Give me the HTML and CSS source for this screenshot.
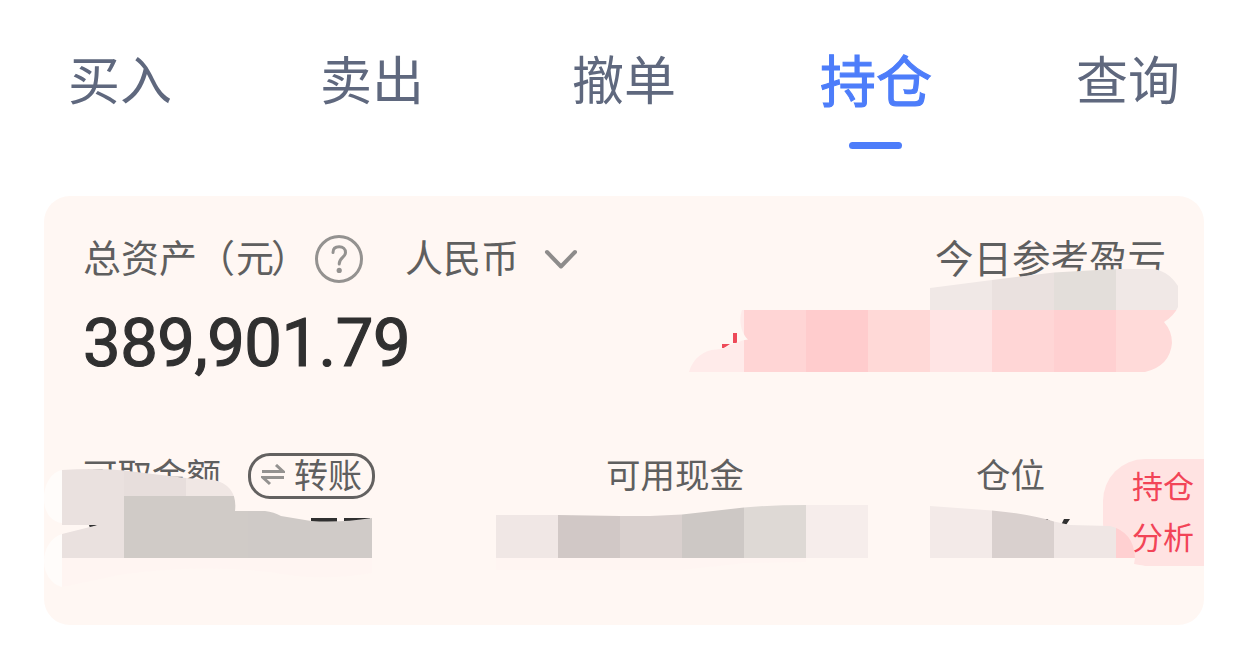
FILE: index.html
```html
<!DOCTYPE html>
<html lang="zh-CN">
<head>
    <meta charset="UTF-8">
    <meta name="viewport" content="width=device-width, initial-scale=1.0">
    <title>持仓</title>
    <link rel="stylesheet" href="styles.css">
</head>
<body>

    <nav class="tabs">
        <a class="tab">买入</a>
        <a class="tab">卖出</a>
        <a class="tab">撤单</a>
        <a class="tab active">持仓</a>
        <a class="tab">查询</a>
    </nav>

    <main class="card">
        <div class="summary">
            <div class="label">总资产（<span class="unit">元</span>）</div>
            <svg class="help" viewBox="0 0 48 48">
                <circle cx="24" cy="24" r="22.5"/>
                <path d="M18 17.5C18 13.5 20.5 11.8 24.2 11.8C28 11.8 30.5 14.2 30.5 17.5C30.5 22.5 24.2 22.5 24.2 29"/>
                <circle class="dot" cx="24.2" cy="35.4" r="2.6"/>
            </svg>
            <div class="label currency">人民币</div>
            <svg class="arrow" viewBox="0 0 34 22">
                <path d="M3 3L17 17.5L31 3"/>
            </svg>
            <div class="label today">今日参考盈亏</div>
        </div>
        <div class="total">389,901.79</div>

        <div class="details">
            <div class="detail">
                <span>可取金额</span>
                <button class="transfer">
                    <svg viewBox="0 0 24 22">
                        <path d="M1 7.5H22L15 1M23 13.5H2L9 20"/>
                    </svg>
                    <span>转账</span>
                </button>
            </div>
            <div class="detail"><span>可用现金</span></div>
            <div class="detail"><span>仓位</span></div>
        </div>

        <div class="analysis">持仓<br>分析</div>

        <!-- mosaic over the private amounts -->
        <svg class="mosaic" viewBox="44 196 1160 429">
            <defs>
                <clipPath id="profit">
                    <path d="M689 372C693 358 704 350 716 349.5C727 349 735 341 748 339.5C742 334 738 322 742 310H930V288L992 280L1054 272.5L1098 270L1120 269H1150Q1167 269 1178 286V307Q1174 316 1164 322Q1172 331 1172 343Q1170 366 1145 372Z"/>
                </clipPath>
                <clipPath id="withdraw">
                    <path d="M62 470Q95 468 124 470.5L186 478L214 480C230 484 237 494 235 511L265 511Q274 512 281 516L311 521Q340 523 372 518V558H62V534L98 525H62Z"/>
                </clipPath>
                <clipPath id="cash">
                    <path d="M496 515H558L620 516H650L682 514.5L744 507.5Q770 505 806 505H868V558H496Z"/>
                </clipPath>
                <clipPath id="position">
                    <path d="M930 506L992 510.5Q1030 514 1054 521.5L1070 525L1110 526Q1134 532 1135 558H930Z"/>
                </clipPath>
            </defs>

            <g class="red">
                <rect x="733" y="333" width="4" height="10"/>
                <path d="M722 344H730L724 348H722Z"/>
            </g>
            <g class="dark">
                <path d="M89 525H98L90 528Z"/>
                <path d="M311 518H337V522H311ZM344 518H370V522H344Z"/>
                <path d="M1044 520L1047 519L1050 521ZM1064 519H1070L1066 525H1061Z"/>
            </g>

            <g clip-path="url(#profit)">
                <rect x="930" y="268" width="62" height="42" fill="#f0e8e6"/>
                <rect x="992" y="268" width="62" height="42" fill="#eae1df"/>
                <rect x="1054" y="268" width="62" height="42" fill="#e3deda"/>
                <rect x="1116" y="268" width="62" height="42" fill="#f0e8e6"/>
                <rect x="688" y="310" width="56" height="62" fill="#ffebea"/>
                <rect x="744" y="310" width="62" height="62" fill="#ffd5d5"/>
                <rect x="806" y="310" width="62" height="62" fill="#ffcccd"/>
                <rect x="868" y="310" width="62" height="62" fill="#ffd9d7"/>
                <rect x="930" y="310" width="62" height="62" fill="#ffe4e4"/>
                <rect x="992" y="310" width="62" height="62" fill="#ffd6d6"/>
                <rect x="1054" y="310" width="62" height="62" fill="#ffd0d1"/>
                <rect x="1116" y="310" width="62" height="62" fill="#ffdad9"/>
            </g>

            <path d="M62 470C40 474 36 520 62 523ZM62 534C38 542 38 580 62 587Z" fill="#fffcfa"/>
            <path d="M62 558H372V573Q320 582 270 572Q200 564 124 574L62 587Z" fill="#fff5f2"/>
            <g clip-path="url(#withdraw)">
                <rect x="62" y="466" width="62" height="92" fill="#eae1df"/>
                <rect x="124" y="466" width="62" height="30" fill="#e7dedc"/>
                <rect x="186" y="466" width="62" height="30" fill="#f0e7e4"/>
                <rect x="124" y="496" width="124" height="62" fill="#d0cbc7"/>
                <rect x="248" y="496" width="62" height="62" fill="#cfcac7"/>
                <rect x="310" y="496" width="62" height="62" fill="#d0cbc8"/>
            </g>

            <path d="M496 558H806V562L744 563L682 570H496Z" fill="#fff5f2"/>
            <g clip-path="url(#cash)">
                <rect x="496" y="500" width="62" height="58" fill="#f0e7e5"/>
                <rect x="558" y="500" width="62" height="58" fill="#d1c8c6"/>
                <rect x="620" y="500" width="62" height="58" fill="#d9d0ce"/>
                <rect x="682" y="500" width="62" height="58" fill="#cdc8c5"/>
                <rect x="744" y="500" width="62" height="58" fill="#ded9d5"/>
                <rect x="806" y="500" width="62" height="58" fill="#f6edeb"/>
            </g>

            <path d="M1100 558H1135L1134 564L1145 566V568H1100Z" fill="#fff7f3"/>
            <g clip-path="url(#position)">
                <rect x="930" y="500" width="62" height="58" fill="#f3eae8"/>
                <rect x="992" y="500" width="62" height="58" fill="#d9d0ce"/>
                <rect x="1054" y="500" width="62" height="58" fill="#efe6e4"/>
                <rect x="1116" y="500" width="20" height="58" fill="#ffd0d1"/>
            </g>
        </svg>
    </main>

</body>
</html>
```
FILE: styles.css
```css
body {
    font-family: "Noto Sans CJK SC", sans-serif;
    margin: 0;
    background-color: #fff;
    color: #5f5f5f;
    height: 647px;
    overflow: hidden;
}
.tabs {
    display: grid;
    grid-template-columns: repeat(5, 252px);
    justify-content: center;
    width: 1248px;
    height: 149px;
}
.tab {
    display: flex;
    flex-direction: column;
    align-items: center;
    font-size: 52px;
    line-height: 76px;
    padding-top: 40px;
    color: #5f687e;
}
.tab.active {
    font-size: 56px;
    color: #4d7dfa;
    -webkit-text-stroke: 1.1px #4d7dfa;
}
.tab.active::after {
    content: "";
    width: 53px;
    height: 7px;
    margin: 26px 2px 0 0;
    border-radius: 4px;
    background-color: #4d7dfa;
}
.card {
    position: relative;
    box-sizing: border-box;
    width: 1160px;
    height: 429px;
    margin: 47px 0 0 44px;
    padding: 36px 38px 0 39px;
    border-radius: 26px;
    background-color: #fff7f3;
    overflow: hidden;
}
.summary {
    display: flex;
    align-items: center;
    height: 54px;
}
.label {
    font-size: 38px;
    line-height: 54px;
    padding-bottom: 7px;
    white-space: nowrap;
}
.unit {
    margin: 0 -3px 0 1px;
}
.help {
    width: 48px;
    height: 48px;
    margin-left: 6px;
    fill: none;
    stroke: #949290;
    stroke-width: 3;
    stroke-linecap: round;
}
.help .dot {
    fill: #949290;
    stroke: none;
}
.currency {
    margin-left: 42px;
}
.arrow {
    width: 34px;
    height: 22px;
    margin: 2px 0 0 25px;
    fill: none;
    stroke: #8e8c8b;
    stroke-width: 4;
    stroke-linecap: round;
    stroke-linejoin: round;
}
.today {
    margin-left: auto;
    font-size: 38.5px;
}
.total {
    font-family: Roboto, sans-serif;
    font-size: 67px;
    font-weight: 400;
    line-height: 80px;
    letter-spacing: -0.5px;
    margin-top: 17px;
    color: #303030;
    -webkit-text-stroke: 1.2px #303030;
}
.details {
    display: grid;
    grid-template-columns: 523px 370px 1fr;
    margin-top: 67px;
    font-size: 34.5px;
    line-height: 46px;
}
.detail {
    display: flex;
    align-items: center;
}
.detail > span {
    padding-bottom: 3px;
}
.transfer {
    display: flex;
    align-items: center;
    gap: 9px;
    box-sizing: border-box;
    width: 127px;
    height: 46px;
    margin: 3px 0 0 27px;
    padding: 0 9px 0 10px;
    border: 3px solid #636160;
    border-radius: 22px;
    background: none;
    font: inherit;
    font-size: 34px;
    line-height: 40px;
    color: #5f5f5f;
    white-space: nowrap;
}
.transfer span {
    padding-bottom: 5px;
}
.transfer svg {
    flex: none;
    width: 24px;
    height: 22px;
    margin-bottom: 2px;
    fill: none;
    stroke: #949290;
    stroke-width: 3;
}
.analysis {
    position: absolute;
    top: 263px;
    right: 0;
    box-sizing: border-box;
    width: 101px;
    height: 107px;
    padding: 0 0 0 29px;
    border-radius: 42px 0 0 42px;
    background-color: #ffe3e2;
    font-size: 31px;
    line-height: 51px;
    color: #f24457;
}
.mosaic {
    position: absolute;
    top: 0;
    left: 0;
    width: 1160px;
    height: 429px;
}
.red {
    fill: #ee4a59;
}
.dark {
    fill: #303030;
}
```
